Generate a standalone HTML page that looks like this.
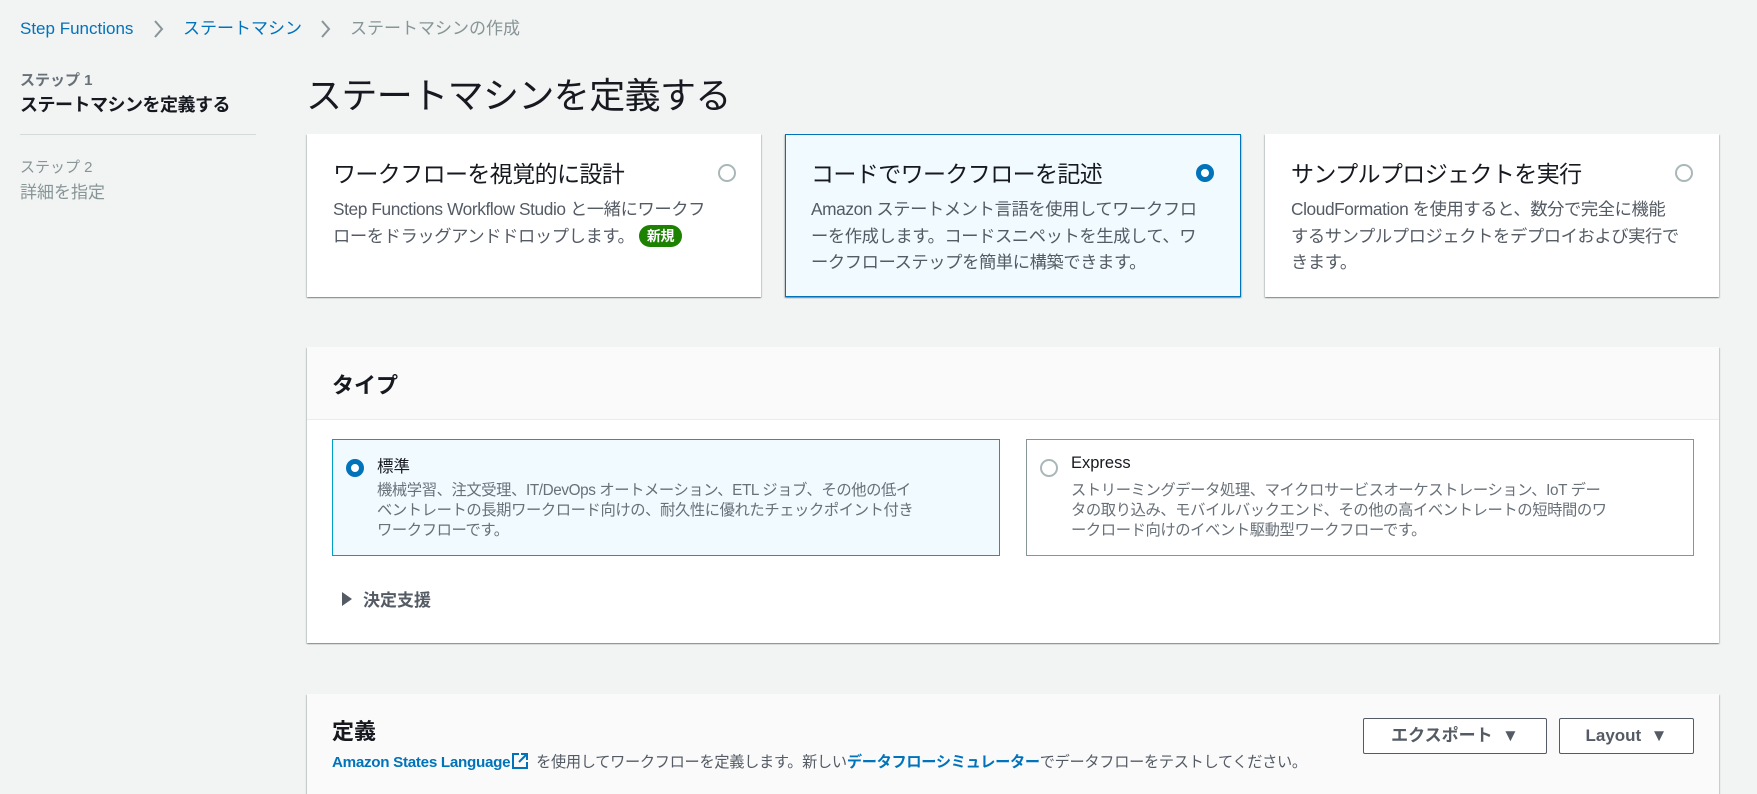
<!DOCTYPE html>
<html><head><meta charset="utf-8"><style>
*{box-sizing:border-box;margin:0;padding:0}
body{width:1757px;height:786px;overflow:hidden;background:#f2f3f3;font-family:"Liberation Sans","Noto Sans CJK JP",sans-serif;color:#16191f;position:relative}
.a{position:absolute;white-space:nowrap}
.bc{top:17px;font-size:17px;line-height:24px;color:#0073bb}
.card{position:absolute;top:134px;height:163px;width:454px;background:#fff;box-shadow:0 1px 1px 0 rgba(0,28,36,.3),1px 1px 1px 0 rgba(0,28,36,.15),-1px 1px 1px 0 rgba(0,28,36,.15)}
.card.sel{background:#f1faff;border:1px solid #0073bb}
.ct{position:absolute;left:26px;top:21px;font-size:23px;letter-spacing:-0.6px}
.cd{position:absolute;left:26px;top:62px;font-size:17.3px;line-height:26.5px;color:#545b64;white-space:nowrap;letter-spacing:-0.4px}
.rad{position:absolute;width:18px;height:18px;border-radius:50%;border:2px solid #aab7b8;background:#fff}
.rad.on{border:5px solid #0073bb}
.panel{position:absolute;left:307px;width:1412px;background:#fff;box-shadow:0 1px 1px 0 rgba(0,28,36,.3),1px 1px 1px 0 rgba(0,28,36,.15),-1px 1px 1px 0 rgba(0,28,36,.15)}
.opt{position:absolute;top:439px;height:117px;border:1px solid #879596;background:#fff}
.opt.on{border-color:#00a1c9;background:#f1faff}
.ot{position:absolute;left:44px;top:14px;font-size:16.5px}
.od{position:absolute;left:44px;top:41px;font-size:15.3px;line-height:19.8px;color:#687078;letter-spacing:-0.4px}
.btn{position:absolute;top:718px;height:36px;border:1px solid #545b64;border-radius:2px;background:#fff;font-weight:bold;font-size:17px;color:#545b64;text-align:center;line-height:34px}
.chev{position:absolute;top:19px}
</style></head><body>
<div class="a bc" style="left:20px">Step Functions</div>
<svg class="chev" style="left:153px" width="12" height="20" viewBox="0 0 12 20"><path d="M2 2l7 8-7 8" fill="none" stroke="#879596" stroke-width="2"/></svg>
<div class="a bc" style="left:183px">ステートマシン</div>
<svg class="chev" style="left:320px" width="12" height="20" viewBox="0 0 12 20"><path d="M2 2l7 8-7 8" fill="none" stroke="#879596" stroke-width="2"/></svg>
<div class="a bc" style="left:350px;color:#879596">ステートマシンの作成</div>

<div class="a" style="left:20px;top:69px;font-size:15px;font-weight:bold;color:#687078">ステップ 1</div>
<div class="a" style="left:20px;top:91px;font-size:18px;font-weight:bold;letter-spacing:-0.5px">ステートマシンを定義する</div>
<div class="a" style="left:20px;top:134px;width:236px;height:1px;background:#d5dbdb"></div>
<div class="a" style="left:20px;top:156px;font-size:15px;color:#879596">ステップ 2</div>
<div class="a" style="left:20px;top:178px;font-size:17px;color:#879596">詳細を指定</div>

<div class="a" style="left:306px;top:67px;font-size:36px;letter-spacing:-0.6px">ステートマシンを定義する</div>

<div class="card" style="left:307px">
<div class="ct">ワークフローを視覚的に設計</div><div class="rad" style="left:411px;top:30px"></div>
<div class="cd">Step Functions Workflow Studio と一緒にワークフ<br>ローをドラッグアンドドロップします。 <span style="display:inline-block;background:#1d8102;color:#fff;font-weight:bold;font-size:14px;line-height:22px;padding:0 8px;border-radius:12px;vertical-align:1px">新規</span></div>
</div>
<div class="card sel" style="left:785px;width:456px">
<div class="ct" style="left:25px;top:20px">コードでワークフローを記述</div><div class="rad on" style="left:410px;top:29px"></div>
<div class="cd" style="left:25px;top:61px">Amazon ステートメント言語を使用してワークフロ<br>ーを作成します。コードスニペットを生成して、ワ<br>ークフローステップを簡単に構築できます。</div>
</div>
<div class="card" style="left:1265px">
<div class="ct">サンプルプロジェクトを実行</div><div class="rad" style="left:410px;top:30px"></div>
<div class="cd">CloudFormation を使用すると、数分で完全に機能<br>するサンプルプロジェクトをデプロイおよび実行で<br>きます。</div>
</div>

<div class="panel" style="top:347px;height:296px">
<div style="height:73px;background:#fafafa;border-bottom:1px solid #eaeded"></div>
<div class="a" style="left:25px;top:21px;font-size:22px;font-weight:bold">タイプ</div>
<div class="a" style="left:35px;top:245px;width:0;height:0;border-left:10px solid #545b64;border-top:7px solid transparent;border-bottom:7px solid transparent"></div>
<div class="a" style="left:56px;top:239px;font-size:17px;font-weight:bold;color:#545b64">決定支援</div>
</div>
<div class="opt on" style="left:332px;width:668px">
<div class="rad on" style="left:13px;top:19px"></div>
<div class="ot" style="top:13px">標準</div>
<div class="od">機械学習、注文受理、IT/DevOps オートメーション、ETL ジョブ、その他の低イ<br>ベントレートの長期ワークロード向けの、耐久性に優れたチェックポイント付き<br>ワークフローです。</div>
</div>
<div class="opt" style="left:1026px;width:668px">
<div class="rad" style="left:13px;top:19px"></div>
<div class="ot">Express</div>
<div class="od">ストリーミングデータ処理、マイクロサービスオーケストレーション、IoT デー<br>タの取り込み、モバイルバックエンド、その他の高イベントレートの短時間のワ<br>ークロード向けのイベント駆動型ワークフローです。</div>
</div>

<div class="panel" style="top:694px;height:100px;background:#fafafa">
<div class="a" style="left:25px;top:20px;font-size:22px;font-weight:bold">定義</div>
<div class="a" style="left:25px;top:56px;font-size:15.2px;color:#545b64;letter-spacing:-0.3px"><b style="color:#0073bb">Amazon States Language</b><svg width="18" height="18" viewBox="0 0 18 18" style="vertical-align:-3px;margin:0 3px 0 1px"><path d="M8 2H2v14h14v-6" fill="none" stroke="#0073bb" stroke-width="2"/><path d="M10 2h6v6M16 2L8 10" fill="none" stroke="#0073bb" stroke-width="2"/></svg> を使用してワークフローを定義します。新しい<b style="color:#0073bb">データフローシミュレーター</b>でデータフローをテストしてください。</div>
</div>
<div class="btn" style="left:1363px;width:184px">エクスポート&nbsp;&nbsp;<span style="font-size:17px">▼</span></div>
<div class="btn" style="left:1559px;width:135px">Layout&nbsp;&nbsp;<span style="font-size:17px">▼</span></div>
</body></html>
